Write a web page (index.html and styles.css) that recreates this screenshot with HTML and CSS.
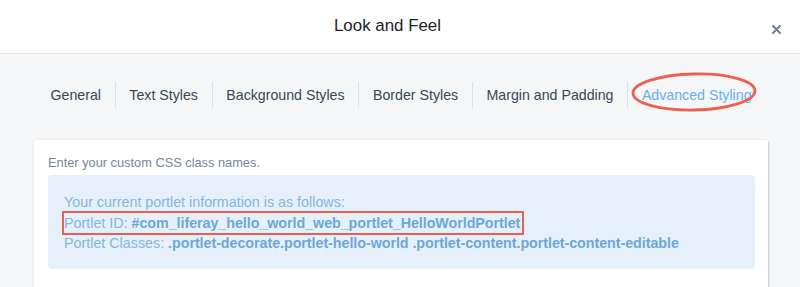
FILE: index.html
```html
<!DOCTYPE html>
<html>
<head>
<meta charset="utf-8">
<link rel="stylesheet" href="styles.css">
</head>
<body>
<div class="modal">
  <header class="modal-header">
    <h1 class="modal-title">Look and Feel</h1>
    <button class="close" aria-label="Close">
      <svg width="9" height="9" viewBox="0 0 9 9"><path d="M1 1L8 8M8 1L1 8" stroke="#6b7a8b" stroke-width="1.8" stroke-linecap="round"/></svg>
    </button>
  </header>
  <div class="modal-body">
    <nav class="tabs">
      <span class="tab">General</span>
      <span class="sep"></span>
      <span class="tab">Text Styles</span>
      <span class="sep"></span>
      <span class="tab">Background Styles</span>
      <span class="sep"></span>
      <span class="tab">Border Styles</span>
      <span class="sep"></span>
      <span class="tab">Margin and Padding</span>
      <span class="sep"></span>
      <span class="tab active">Advanced Styling
        <svg class="oval" width="128" height="42" viewBox="0 0 128 42"><ellipse cx="64" cy="21" rx="61" ry="18" fill="none" stroke="#ec6150" stroke-width="2.8" transform="rotate(-1.2 64 21)"/></svg>
      </span>
    </nav>
    <section class="card">
      <p class="label">Enter your custom CSS class names.</p>
      <div class="info">
        <div class="line">Your current portlet information is as follows:</div>
        <div class="line"><span class="mark">Portlet ID: <b>#com_liferay_hello_world_web_portlet_HelloWorldPortlet</b></span></div>
        <div class="line">Portlet Classes: <b>.portlet-decorate.portlet-hello-world .portlet-content.portlet-content-editable</b></div>
      </div>
    </section>
  </div>
</div>
</body>
</html>
```
FILE: styles.css
```css
html, body {
  margin: 0;
  padding: 0;
}
body {
  font-family: "Liberation Sans", Arial, sans-serif;
  background: #f4f6f8;
  height: 287px;
  overflow: hidden;
}
.modal-header {
  height: 53px;
  background: #ffffff;
  border-bottom: 1px solid #e6e9ed;
  display: flex;
  align-items: center;
  justify-content: center;
  position: relative;
}
.modal-title {
  margin: 0 0 1px -25px;
  font-size: 16.9px;
  font-weight: normal;
  color: #1f2328;
  line-height: 20px;
}
.close {
  position: absolute;
  right: 19px;
  top: 24px;
  width: 10px;
  height: 10px;
  padding: 0;
  border: 0;
  background: none;
  display: flex;
  align-items: center;
  justify-content: center;
}
.modal-body {
  padding: 28px 32px 0 34px;
}
.tabs {
  display: flex;
  justify-content: center;
  align-items: center;
  height: 26px;
}
.tab {
  font-size: 14.2px;
  color: #3a4757;
  padding: 0 13.7px;
  line-height: 26px;
  white-space: nowrap;
  position: relative;
}
.tab.active {
  color: #67afee;
}
.sep {
  width: 1px;
  height: 26px;
  background: #dde1e6;
}
.oval {
  position: absolute;
  left: 2px;
  top: -11px;
}
.card {
  margin-top: 32px;
  background: #ffffff;
  box-shadow: 0 0 2px rgba(0, 0, 0, 0.08), 1px 1px 2px rgba(0, 0, 0, 0.16);
  border-radius: 2px;
  padding: 15px 13px 40px 14px;
  height: 200px;
}
.label {
  margin: 0 0 5px 0;
  font-size: 12.8px;
  line-height: 15px;
  color: #75879a;
}
.info {
  background: #e6f0fa;
  border-radius: 4px;
  padding: 17px 16px 15px 16px;
  color: #84b6de;
  font-size: 14.3px;
  line-height: 20.6px;
}
.info b {
  color: #6ba8d8;
  letter-spacing: -0.05px;
}
.line {
  white-space: nowrap;
}
.mark {
  display: inline-block;
  outline: 2.6px solid #ec5e4f;
  outline-offset: -0.5px;
  padding: 0 2px 0 0;
  line-height: 20px;
}
```
